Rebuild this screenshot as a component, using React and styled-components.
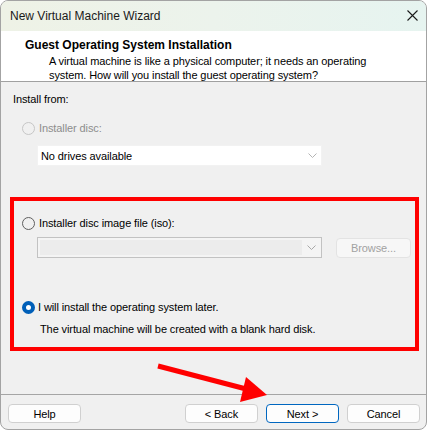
import React from "react";
import styled, { createGlobalStyle } from "styled-components";

const GlobalStyle = createGlobalStyle`
  html, body {
    margin: 0;
    padding: 0;
    background: #ffffff;
  }
  body {
    font-family: "Liberation Sans", Arial, sans-serif;
    font-size: 11px;
    letter-spacing: -0.1px;
    color: #000;
  }
`;

const Chevron = ({ color = "#a8a8a8" }) => (
  <svg width="9" height="5" viewBox="0 0 9 5">
    <path d="M0.5 0.5 L4.5 4.5 L8.5 0.5" fill="none" stroke={color} strokeWidth="1" />
  </svg>
);

const CloseIcon = () => (
  <svg width="11" height="11" viewBox="0 0 11 11">
    <path d="M0.5 0.5 L10.5 10.5 M10.5 0.5 L0.5 10.5" stroke="#1a1a1a" strokeWidth="1.1" />
  </svg>
);

const Wizard = () => {
  return (
    <Page>
      <GlobalStyle />
      <Window>
        <TitleBar>
          <span>New Virtual Machine Wizard</span>
          <CloseButton>
            <CloseIcon />
          </CloseButton>
        </TitleBar>

        <Header>
          <h2>Guest Operating System Installation</h2>
          <p>
            A virtual machine is like a physical computer; it needs an operating
            <br />
            system. How will you install the guest operating system?
          </p>
        </Header>

        <Body>
          <SectionLabel>Install from:</SectionLabel>

          <RadioRow $disabled>
            <Radio $disabled />
            <span>Installer disc:</span>
          </RadioRow>
          <DiscSelect>
            <span>No drives available</span>
            <Chevron color="#b4b4b4" />
          </DiscSelect>

          <Highlight>
            <RadioRow>
              <Radio />
              <span>Installer disc image file (iso):</span>
            </RadioRow>
            <IsoRow>
              <IsoSelect>
                <IsoField />
                <IsoArrow>
                  <Chevron color="#a8a8a8" />
                </IsoArrow>
              </IsoSelect>
              <BrowseButton disabled>Browse...</BrowseButton>
            </IsoRow>

            <RadioRow $gap="3px" $top="41px">
              <Radio $checked />
              <span>I will install the operating system later.</span>
            </RadioRow>
            <Hint>The virtual machine will be created with a blank hard disk.</Hint>
          </Highlight>
        </Body>

        <Footer>
          <Button>Help</Button>
          <Spacer />
          <Button>&lt; Back</Button>
          <Button $primary>Next &gt;</Button>
          <Button>Cancel</Button>
        </Footer>
      </Window>

      <Arrow width="428" height="430" viewBox="0 0 428 430">
        <line x1="158" y1="366" x2="250" y2="390" stroke="#ff0000" strokeWidth="5" />
        <polygon points="246,377 240,402 267,395" fill="#ff0000" />
      </Arrow>
    </Page>
  );
};

const Page = styled.div`
  position: relative;
  width: 428px;
  height: 430px;
  overflow: hidden;
`;

const Window = styled.div`
  box-sizing: border-box;
  width: 427px;
  height: 430px;
  border: 1px solid #a3a3a3;
  border-radius: 8px;
  overflow: hidden;
  display: flex;
  flex-direction: column;
  background: #f0f0f0;
`;

const TitleBar = styled.div`
  height: 30px;
  flex: none;
  display: flex;
  align-items: center;
  justify-content: space-between;
  padding: 0 8px 0 9px;
  background: linear-gradient(90deg, #eef2e6 0%, #ecf3ec 50%, #e6f4f0 100%);
  font-size: 12px;
  letter-spacing: 0;
  color: #1a1a1a;
`;

const CloseButton = styled.div`
  width: 12px;
  height: 12px;
  display: flex;
  align-items: center;
  justify-content: center;
  margin-top: -2px;
`;

const Header = styled.div`
  box-sizing: border-box;
  height: 51px;
  flex: none;
  background: #ffffff;
  border-bottom: 1px solid #a0a0a0;
  padding: 6px 0 0 24px;

  h2 {
    margin: 0;
    font-size: 12px;
    font-weight: 700;
    line-height: 16px;
    letter-spacing: 0;
    color: #000;
  }

  p {
    margin: 1px 0 0 24px;
    line-height: 14px;
    color: #000;
  }
`;

const Body = styled.div`
  flex: 1;
  padding: 9px 0 0 9px;
  display: flex;
  flex-direction: column;
  align-items: flex-start;
`;

const SectionLabel = styled.div`
  margin-left: 3px;
  line-height: 16px;
`;

const RadioRow = styled.label`
  display: flex;
  align-items: center;
  gap: ${(p) => p.$gap || "4px"};
  margin: ${(p) => p.$top || "13px"} 0 0 12px;
  line-height: 16px;
  color: ${(p) => (p.$disabled ? "#8d8d8d" : "#000")};
`;

const Radio = styled.span`
  box-sizing: border-box;
  width: 13px;
  height: 13px;
  border-radius: 50%;
  flex: none;
  border: ${(p) =>
    p.$checked
      ? "4px solid #005fb8"
      : p.$disabled
      ? "1px solid #c6c6c6"
      : "1px solid #5f5f5f"};
  background: ${(p) => (p.$checked ? "#ffffff" : "transparent")};
`;

const DiscSelect = styled.div`
  box-sizing: border-box;
  width: 285px;
  height: 21px;
  margin: 9px 0 0 27px;
  padding: 0 4px 0 3px;
  display: flex;
  align-items: center;
  justify-content: space-between;
  background: #ffffff;
  border: 1px solid #f2f2f2;
`;

const Highlight = styled.div`
  box-sizing: border-box;
  width: 409px;
  margin-top: 31px;
  border: 4px solid #ff0000;
  padding: 1px 0 10px 8px;
  display: flex;
  flex-direction: column;
  align-items: flex-start;

  & > ${RadioRow} {
    margin-left: 0;
  }
`;

const IsoRow = styled.div`
  display: flex;
  align-items: center;
  gap: 14px;
  margin: 6px 0 0 15px;
`;

const IsoSelect = styled.div`
  box-sizing: border-box;
  width: 285px;
  height: 21px;
  display: flex;
  align-items: stretch;
  border: 1px solid #c2c2c2;
  background: #f4f4f4;
  padding: 2px 0 2px 2px;
`;

const IsoField = styled.div`
  flex: 1;
  background: #ececec;
`;

const IsoArrow = styled.div`
  width: 19px;
  display: flex;
  align-items: center;
  justify-content: center;
`;

const BrowseButton = styled.button`
  box-sizing: border-box;
  width: 75px;
  height: 20px;
  padding: 0;
  font-family: inherit;
  font-size: 11px;
  letter-spacing: -0.1px;
  color: #a2a2a2;
  background: #f7f7f7;
  border: 1px solid #e3e3e3;
  border-radius: 4px;
`;

const Hint = styled.div`
  margin: 6px 0 0 18px;
  line-height: 16px;
`;

const Footer = styled.div`
  flex: none;
  border-top: 1px solid #a5a5a5;
  padding: 9px 6px 6px 7px;
  display: flex;
  gap: 8px;
`;

const Spacer = styled.div`
  flex: 1;
`;

const Button = styled.button`
  box-sizing: border-box;
  width: 73px;
  height: 19px;
  padding: 0;
  font-family: inherit;
  font-size: 11px;
  letter-spacing: -0.1px;
  color: #000;
  background: #fdfdfd;
  border: 1px solid ${(p) => (p.$primary ? "#0067c0" : "#d0d0d0")};
  border-radius: 4px;
`;

const Arrow = styled.svg`
  position: absolute;
  left: 0;
  top: 0;
  pointer-events: none;
`;

export default function App() {
  return <Wizard />;
}
